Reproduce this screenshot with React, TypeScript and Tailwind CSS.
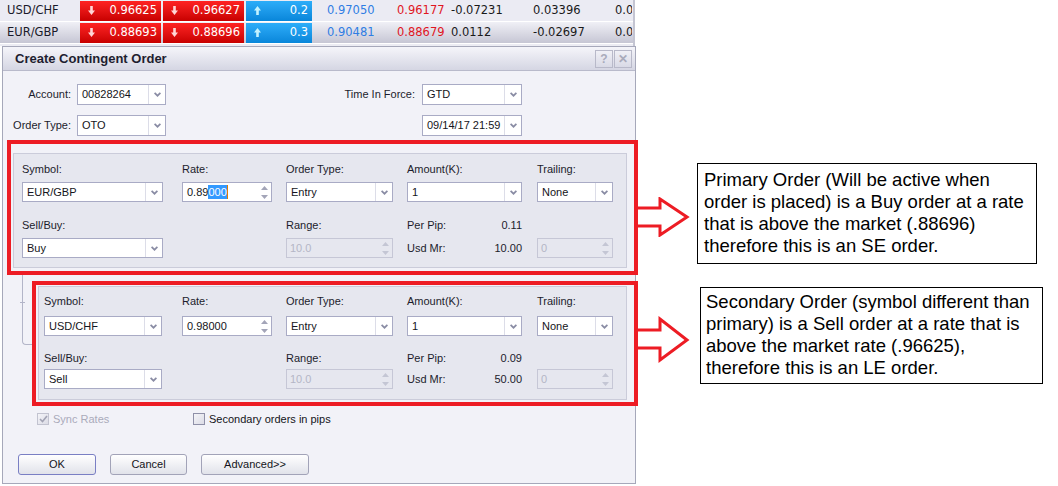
import React from "react";

const SANS = "font-['Liberation_Sans',Arial,sans-serif]";

function Chevron() {
  return (
    <svg width="7" height="5" viewBox="0 0 7 5">
      <path d="M0.6 0.8 L3.5 3.7 L6.4 0.8" fill="none" stroke="#8a8ca4" strokeWidth="1.7" />
    </svg>
  );
}

function Combo({ w, h = "h-[20px]", children }: { w: string; h?: string; children: React.ReactNode }) {
  return (
    <div className={`${w} ${h} flex border border-[#a9abc5] bg-white`}>
      <div className="flex-1 flex items-center pl-[4px] text-[11px] text-[#141420] whitespace-nowrap overflow-hidden">{children}</div>
      <div className="w-[17px] flex items-center justify-center border-l border-[#dcdde8] bg-white">
        <Chevron />
      </div>
    </div>
  );
}

function SpinArrows({ color }: { color: string }) {
  return (
    <div className="w-[14px] flex flex-col items-center justify-center gap-[5px]">
      <svg width="7" height="4" viewBox="0 0 7 4">
        <path d="M0 4 L3.5 0 L7 4 Z" fill={color} />
      </svg>
      <svg width="7" height="4" viewBox="0 0 7 4">
        <path d="M0 0 L3.5 4 L7 0 Z" fill={color} />
      </svg>
    </div>
  );
}

function Spin({ w, children }: { w: string; children: React.ReactNode }) {
  return (
    <div className={`${w} h-[20px] flex border border-[#a9abc5] bg-white`}>
      <div className="flex-1 flex items-center pl-[4px] text-[11px] text-[#141420] whitespace-nowrap">{children}</div>
      <SpinArrows color="#a3a5b8" />
    </div>
  );
}

function DisabledSpin({ w, children }: { w: string; children: React.ReactNode }) {
  return (
    <div className={`${w} h-[20px] flex border border-[#c6c7d6] bg-[#e6e7ef]`}>
      <div className="flex-1 flex items-center pl-[3px] text-[11px] text-[#b4b6c6] whitespace-nowrap">{children}</div>
      <SpinArrows color="#c4c6d4" />
    </div>
  );
}

function Label({ children }: { children?: React.ReactNode }) {
  return <div className="h-[13px] leading-[13px] text-[11px] text-[#1c1c2c] whitespace-nowrap">{children}</div>;
}

type PanelProps = {
  outer: string;
  symW: string;
  symMl: string;
  col2Ml: string;
  g1: string;
  g2: string;
  g3: string;
  symbol: string;
  rate: React.ReactNode;
  sellBuy: string;
  perPip: string;
  usdMr: string;
};

function OrderPanel(p: PanelProps) {
  const Col = ({ ml, w, a, b, c, d }: { ml: string; w: string; a: React.ReactNode; b: React.ReactNode; c: React.ReactNode; d: React.ReactNode }) => (
    <div className={`${ml} ${w} flex flex-col`}>
      <Label>{a}</Label>
      <div className={`${p.g1}`}>{b}</div>
      <div className={`${p.g2}`}>{c}</div>
      <div className={`${p.g3} h-[20px]`}>{d}</div>
    </div>
  );
  return (
    <div className={`${p.outer} flex border border-[#cbccda] bg-[#e6e7ef]`}>
      <Col ml={p.symMl} w={p.symW} a="Symbol:" b={<Combo w={p.symW}>{p.symbol}</Combo>} c={<Label>Sell/Buy:</Label>} d={<Combo w={p.symW}>{p.sellBuy}</Combo>} />
      <Col ml={p.col2Ml} w="w-[90px]" a="Rate:" b={<Spin w="w-[90px]">{p.rate}</Spin>} c={<Label />} d={null} />
      <Col ml="ml-[14px]" w="w-[107px]" a="Order Type:" b={<Combo w="w-[107px]">Entry</Combo>} c={<Label>Range:</Label>} d={<DisabledSpin w="w-[107px]">10.0</DisabledSpin>} />
      <Col
        ml="ml-[14px]"
        w="w-[115px]"
        a="Amount(K):"
        b={<Combo w="w-[115px]">1</Combo>}
        c={
          <div className="flex justify-between h-[13px] leading-[13px] text-[11px] text-[#1c1c2c]">
            <span>Per Pip:</span>
            <span>{p.perPip}</span>
          </div>
        }
        d={
          <div className="flex justify-between items-center h-[20px] text-[11px] text-[#1c1c2c]">
            <span>Usd Mr:</span>
            <span>{p.usdMr}</span>
          </div>
        }
      />
      <Col ml="ml-[15px]" w="w-[76px]" a="Trailing:" b={<Combo w="w-[76px]">None</Combo>} c={<Label />} d={<DisabledSpin w="w-[76px]">0</DisabledSpin>} />
    </div>
  );
}

function DownArrow({ color }: { color: string }) {
  return (
    <svg width="7" height="9" viewBox="0 0 7 9">
      <path d="M2.2 0 H4.8 V4.5 H7 L3.5 9 L0 4.5 H2.2 Z" fill={color} />
    </svg>
  );
}
function UpArrow({ color }: { color: string }) {
  return (
    <svg width="7" height="9" viewBox="0 0 7 9">
      <path d="M2.2 9 H4.8 V4.5 H7 L3.5 0 L0 4.5 H2.2 Z" fill={color} />
    </svg>
  );
}

function TickerRow({ sym, bid, ask, spr, hi, lo, c1, c2, bg }: { sym: string; bid: string; ask: string; spr: string; hi: string; lo: string; c1: string; c2: string; bg: string }) {
  return (
    <div className={`h-[22px] flex items-center ${bg} border-b border-white font-['DejaVu_Sans',Verdana,sans-serif] text-[11.5px]`}>
      <div className="w-[80px] pl-[7px] text-[#1a1a2a]">{sym}</div>
      <div className="w-[81px] h-[20px] flex items-center justify-between pl-[8px] pr-[4px] bg-gradient-to-b from-[#ff2222] to-[#c80000] text-white">
        <DownArrow color="#ffd6d6" />
        <span>{bid}</span>
      </div>
      <div className="ml-[2px] w-[81px] h-[20px] flex items-center justify-between pl-[8px] pr-[4px] bg-gradient-to-b from-[#ff2222] to-[#c80000] text-white">
        <DownArrow color="#ffd6d6" />
        <span>{ask}</span>
      </div>
      <div className="ml-[2px] w-[66px] h-[20px] flex items-center justify-between pl-[8px] pr-[4px] bg-gradient-to-b from-[#2cadf9] to-[#0786da] text-white">
        <UpArrow color="#c4f3ff" />
        <span>{spr}</span>
      </div>
      <div className="w-[80px] pl-[15px] text-[#2f7de3]">{hi}</div>
      <div className="w-[54px] pl-[5px] text-[#e0161f]">{lo}</div>
      <div className="w-[82px] pl-[5px] text-[#1a1a1a]">{c1}</div>
      <div className="w-[82px] pl-[5px] text-[#1a1a1a]">{c2}</div>
      <div className="w-[22px] pl-[5px] overflow-hidden whitespace-nowrap text-[#1a1a1a]">0.0</div>
    </div>
  );
}

function Check({ checked, disabled }: { checked?: boolean; disabled?: boolean }) {
  return (
    <div className={`w-[12px] h-[12px] border ${disabled ? "border-[#c2c3d0]" : "border-[#8f90a8]"} bg-gradient-to-br from-[#f4f4f8] to-[#dcdce6] flex items-center justify-center`}>
      {checked && (
        <svg width="9" height="8" viewBox="0 0 9 8">
          <path d="M1 4 L3.5 6.5 L8 1" fill="none" stroke="#a2a3b4" strokeWidth="1.6" />
        </svg>
      )}
    </div>
  );
}

function Btn({ w, def, children }: { w: string; def?: boolean; children: React.ReactNode }) {
  return (
    <div className={`${w} h-[21px] flex items-center justify-center rounded-[3px] border ${def ? "border-[#7a7fc4]" : "border-[#a2a3b8]"} bg-gradient-to-b from-white to-[#e1e2ea] text-[11px] text-[#141420]`}>
      {children}
    </div>
  );
}

function BigArrow({ h, shaftTop, shaftBot, headTop, headBot, mid }: { h: number; shaftTop: number; shaftBot: number; headTop: number; headBot: number; mid: number }) {
  const pts = `0,${shaftTop} 22,${shaftTop} 22,${headTop} 49,${mid} 22,${headBot} 22,${shaftBot} 0,${shaftBot}`;
  return (
    <svg width="52" height={h} viewBox={`0 0 52 ${h}`}>
      <polyline points={pts} fill="none" stroke="#ed1c24" strokeWidth="3" strokeLinejoin="miter" />
    </svg>
  );
}

export default function App() {
  return (
    <div className={`w-[1058px] h-[486px] bg-white flex overflow-hidden ${SANS}`}>
      {/* Left: ticker + dialog */}
      <div className="w-[638px] shrink-0 flex flex-col">
        <div className="w-[635px] border-r-2 border-[#c4c5d2] bg-[#ececf3]">
          <TickerRow sym="USD/CHF" bid="0.96625" ask="0.96627" spr="0.2" hi="0.97050" lo="0.96177" c1="-0.07231" c2="0.03396" bg="bg-[#ebebf3]" />
          <TickerRow sym="EUR/GBP" bid="0.88693" ask="0.88696" spr="0.3" hi="0.90481" lo="0.88679" c1="0.0112" c2="-0.02697" bg="bg-gradient-to-b from-[#f0f0f6] to-[#c6c6d4]" />
          <div className="h-[2px] bg-[#ececf3]" />
        </div>

        <div className="ml-[2px] w-[634px] border border-[#a6a8ba] bg-[#f2f2f8] flex flex-col">
          {/* Title bar */}
          <div className="h-[24px] flex items-center justify-between pl-[12px] pr-[3px] border-b border-[#b9bacb] bg-gradient-to-b from-[#f5f5fa] to-[#d5d6e3]">
            <span className="text-[13px] font-bold text-[#1e1e30]">Create Contingent Order</span>
            <div className="flex gap-[1px]">
              <div className="w-[18px] h-[18px] border border-[#b8b9c9] bg-gradient-to-b from-[#f0f0f6] to-[#d9dae6] flex items-center justify-center text-[12px] font-bold text-[#a9abbb]">?</div>
              <div className="w-[18px] h-[18px] border border-[#b8b9c9] bg-gradient-to-b from-[#f0f0f6] to-[#d9dae6] flex items-center justify-center text-[12px] font-bold text-[#a9abbb]">✕</div>
            </div>
          </div>

          {/* Body */}
          <div className="flex flex-col pt-[13px] pb-[8px]">
            <div className="flex items-center h-[21px]">
              <div className="w-[68px] text-right text-[11px] text-[#1c1c2c]">Account:</div>
              <div className="ml-[6px]"><Combo w="w-[89px]" h="h-[21px]">00828264</Combo></div>
              <div className="w-[249px] text-right text-[11px] text-[#1c1c2c]">Time In Force:</div>
              <div className="ml-[7px]"><Combo w="w-[100px]" h="h-[21px]">GTD</Combo></div>
            </div>
            <div className="flex items-center h-[21px] mt-[10px]">
              <div className="w-[68px] text-right text-[11px] text-[#1c1c2c]">Order Type:</div>
              <div className="ml-[6px]"><Combo w="w-[89px]" h="h-[21px]">OTO</Combo></div>
              <div className="ml-[256px]"><Combo w="w-[100px]" h="h-[21px]">09/14/17 21:59</Combo></div>
            </div>

            {/* Primary order */}
            <div className="mt-[4px] ml-[4px] w-[631px] border-4 border-[#ed1c24] pl-[2px] pt-[9px] pr-[7px] pb-[3px]">
              <OrderPanel
                outer="w-[614px] pt-[9px]"
                symW="w-[141px]"
                symMl="ml-[8px]"
                col2Ml="ml-[19px]"
                g1="mt-[6px]"
                g2="mt-[17px]"
                g3="mt-[6px] mb-[9px]"
                symbol="EUR/GBP"
                rate={
                  <span className="flex items-center">
                    0.89<span className="bg-[#3399ff] text-white leading-[14px]">000</span>
                    <span className="w-[1px] h-[14px] bg-[#e07b00]" />
                  </span>
                }
                sellBuy="Buy"
                perPip="0.11"
                usdMr="10.00"
              />
            </div>

            {/* Secondary order */}
            <div className="flex">
              <div className="w-[29px] shrink-0">
                <div className="relative ml-[19px] w-[10px] h-[70px] border-l border-b border-[#b3b5c8] rounded-bl-[4px]">
                  <div className="absolute left-[-3px] top-[27px] w-[5px] h-[1px] bg-[#b3b5c8]" />
                </div>
              </div>
              <div className="mt-[6px] w-[606px] border-4 border-[#ed1c24] pl-[2px] pt-[1px] pr-[7px] pb-[2px]">
                <OrderPanel
                  outer="w-[589px] pt-[8px]"
                  symW="w-[118px]"
                  symMl="ml-[5px]"
                  col2Ml="ml-[20px]"
                  g1="mt-[8px]"
                  g2="mt-[16px]"
                  g3="mt-[4px] mb-[10px]"
                  symbol="USD/CHF"
                  rate="0.98000"
                  sellBuy="Sell"
                  perPip="0.09"
                  usdMr="50.00"
                />
              </div>
            </div>

            {/* Checkboxes */}
            <div className="flex items-center mt-[7px] ml-[34px] h-[12px]">
              <div className="w-[156px] flex items-center gap-[4px]">
                <Check checked disabled />
                <span className="text-[11px] text-[#aaabbb]">Sync Rates</span>
              </div>
              <div className="flex items-center gap-[4px]">
                <Check />
                <span className="text-[11px] text-[#141420]">Secondary orders in pips</span>
              </div>
            </div>

            {/* Buttons */}
            <div className="flex mt-[29px] ml-[15px] gap-[14px]">
              <Btn w="w-[78px]" def>OK</Btn>
              <Btn w="w-[77px]">Cancel</Btn>
              <Btn w="w-[108px]">Advanced&gt;&gt;</Btn>
            </div>
          </div>
        </div>
      </div>

      {/* Right: annotations */}
      <div className="flex flex-col pt-[163px]">
        <div className="flex items-start">
          <div className="mt-[34px]">
            <BigArrow h={40} shaftTop={11} shaftBot={29} headTop={2} headBot={38} mid={20} />
          </div>
          <div className="ml-[7px] w-[340px] border border-black pl-[6px] pt-[5px] pb-[6px] text-[18.5px] leading-[22px] text-black whitespace-nowrap">
            Primary Order (Will be active when
            <br />
            order is placed) is a Buy order at a rate
            <br />
            that is above the market (.88696)
            <br />
            therefore this is an SE order.
          </div>
        </div>
        <div className="flex items-start mt-[23px]">
          <div className="mt-[29px]">
            <BigArrow h={47} shaftTop={14} shaftBot={32} headTop={3} headBot={44} mid={24} />
          </div>
          <div className="ml-[10px] w-[343px] border border-black pl-[5px] pt-[3px] pb-[4px] text-[18.5px] leading-[22px] text-black whitespace-nowrap">
            Secondary Order (symbol different than
            <br />
            primary) is a Sell order at a rate that is
            <br />
            above the market rate (.96625),
            <br />
            therefore this is an LE order.
          </div>
        </div>
      </div>
    </div>
  );
}
